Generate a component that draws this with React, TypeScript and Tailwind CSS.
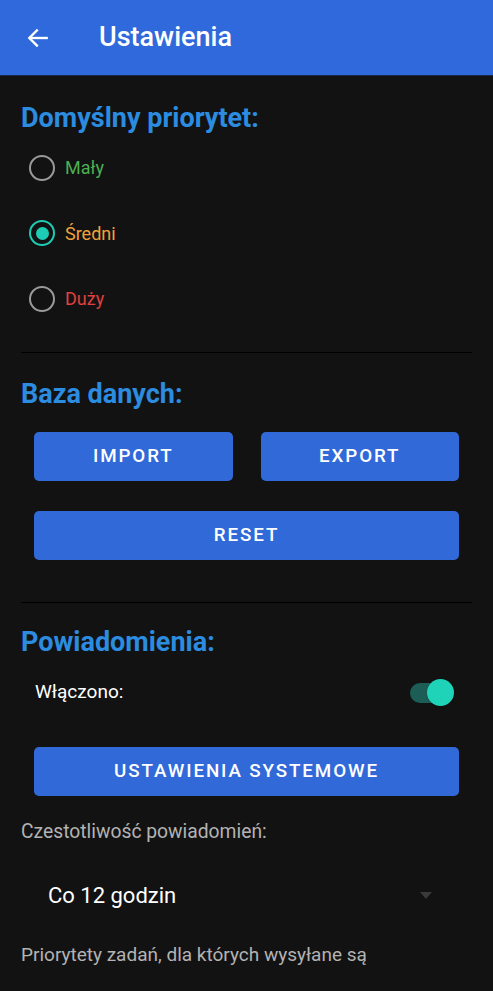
import React from 'react'

const font = { fontFamily: "Roboto, 'Noto Sans', sans-serif" }

const Radio = ({ checked, label, color }: { checked?: boolean; label: string; color: string }) => (
  <div className="flex h-[65.5px] items-center pl-[8px]">
    <div
      className={`flex h-[26px] w-[26px] items-center justify-center rounded-full border-[2.5px] ${
        checked ? 'border-[#1ccdb4]' : 'border-[#9a9a9a]'
      }`}
    >
      {checked && <div className="h-[13px] w-[13px] rounded-full bg-[#1ccdb4]" />}
    </div>
    <span className={`ml-[10px] text-[18px] ${color}`}>{label}</span>
  </div>
)

const Btn = ({ children, className = '' }: { children: React.ReactNode; className?: string }) => (
  <div
    className={`flex h-[49px] items-center justify-center rounded-[5px] bg-[#3169d9] text-[18.8px] font-medium tracking-[0.1em] text-white ${className}`}
  >
    {children}
  </div>
)

const App = () => {
  return (
    <div className="min-h-[991px] w-[493px] overflow-hidden bg-[#121212]" style={font}>
      {/* toolbar */}
      <div className="flex h-[76px] items-center border-b border-[#1b2a48] bg-[#2f69db] text-white">
        <svg className="ml-[25px]" width="26" height="26" viewBox="0 0 24 24" fill="none" stroke="white" strokeWidth="2.2" strokeLinecap="square">
          <path d="M20 12H5" />
          <path d="M11 5l-7 7 7 7" strokeLinejoin="miter" />
        </svg>
        <span className="ml-[48px] text-[27px] font-medium">Ustawienia</span>
      </div>

      <div className="px-[21px]">
        <h2 className="mt-[26px] h-[32px] text-[27px] font-bold leading-[32px] text-[#2b8ce0]">Domyślny priorytet:</h2>
        <div className="mt-[1px]">
          <Radio label="Mały" color="text-[#4caf50]" />
          <Radio checked label="Średni" color="text-[#f0a23a]" />
          <Radio label="Duży" color="text-[#e0403e]" />
        </div>

        <div className="mt-[20px] h-px bg-black" />

        <h2 className="mt-[25px] h-[32px] text-[27px] font-bold leading-[32px] text-[#2b8ce0]">Baza danych:</h2>
        <div className="mt-[22px] px-[13px]">
          <div className="grid grid-cols-2 gap-[28px]">
            <Btn>IMPORT</Btn>
            <Btn>EXPORT</Btn>
          </div>
          <Btn className="mt-[30px]">RESET</Btn>
        </div>

        <div className="mt-[42px] h-px bg-black" />

        <h2 className="mt-[23px] h-[32px] text-[27px] font-bold leading-[32px] text-[#2b8ce0]">Powiadomienia:</h2>
        <div className="mt-[18px] flex h-[34px] items-center justify-between pl-[14px] pr-[22px]">
          <span className="text-[19px] text-white">Włączono:</span>
          <div className="relative h-[20px] w-[40px] rounded-full bg-[#1c5d55]">
            <div className="absolute right-[-4px] top-[-3.5px] h-[27px] w-[27px] rounded-full bg-[#1ed3b7] shadow" />
          </div>
        </div>
        <div className="mt-[37px] px-[13px]">
          <Btn>USTAWIENIA SYSTEMOWE</Btn>
        </div>

        <div className="mt-[24px] text-[19.3px] leading-[24px] text-[#b3b3b3]">Czestotliwość powiadomień:</div>
        <div className="mt-[36px] flex h-[32px] items-center justify-between pl-[27px] pr-[40px]">
          <span className="text-[22px] text-white">Co 12 godzin</span>
          <svg width="12" height="7" viewBox="0 0 12 7">
            <path d="M0 0h12L6 7z" fill="#3a3a3a" />
          </svg>
        </div>
        <div className="mt-[31px] text-[19px] leading-[24px] text-[#b3b3b3]">
          Priorytety zadań, dla których wysyłane są
        </div>
      </div>
    </div>
  )
}

export default App
